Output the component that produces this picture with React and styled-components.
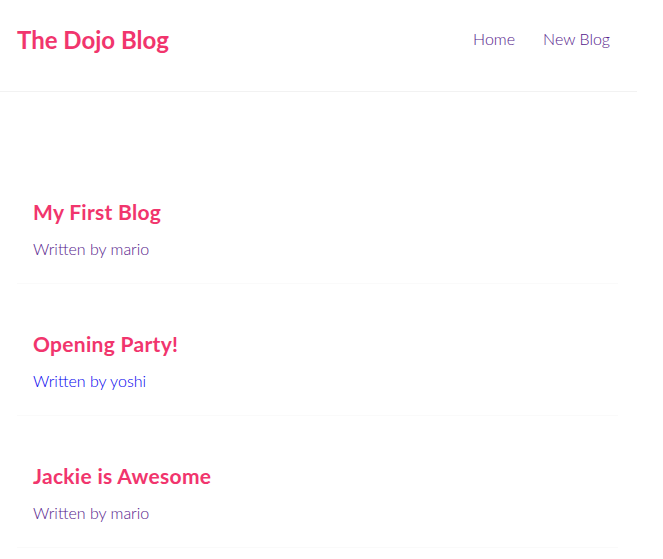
import React from 'react';
import styled, { createGlobalStyle } from 'styled-components';

const GlobalStyle = createGlobalStyle`
    body {
        margin: 0;
        background: #ffffff;
        font-family: Lato, "Noto Sans", sans-serif;
    }
    * {
        box-sizing: border-box;
    }
`;

const Navbar = styled.nav`
    display: flex;
    align-items: center;
    width: 637px;
    height: 92px;
    padding: 20px 21px 31px 17px;
    border-bottom: 1px solid #f2f2f2;
`;

const Title = styled.h1`
    margin: 0;
    font-size: 24px;
    line-height: 40px;
    font-weight: 700;
    color: #f1356d;
`;

const Links = styled.div`
    margin-left: auto;
    padding-bottom: 4px;
    display: flex;
`;

const NavLink = styled.a`
    margin-left: 16px;
    padding: 6px;
    font-size: 16px;
    font-weight: 300;
    color: #551a8b;
    text-decoration: none;
`;

const Content = styled.div`
    width: 601px;
    margin: 40px 0 0 17px;
    padding: 20px 0;
`;

const Preview = styled.div`
    margin-top: 38px;
    padding: 10px 16px 24px;
    border-bottom: 1px solid #fafafa;
`;

const PreviewTitle = styled.h2`
    margin: 0;
    font-size: 21px;
    line-height: 24px;
    font-weight: 700;
    letter-spacing: 0.3px;
    color: #f1356d;
`;

const Author = styled.p`
    margin: 15px 0 0;
    font-size: 16px;
    line-height: 20px;
    font-weight: 300;
    color: ${props => (props.$visited ? '#551a8b' : '#0000ee')};
`;

const blogs = [
    { id: 1, title: 'My First Blog', author: 'mario', visited: true },
    { id: 2, title: 'Opening Party!', author: 'yoshi', visited: false },
    { id: 3, title: 'Jackie is Awesome', author: 'mario', visited: true },
];

const App = () => {
    return (
        <>
            <GlobalStyle />
            <Navbar>
                <Title>The Dojo Blog</Title>
                <Links>
                    <NavLink href="#">Home</NavLink>
                    <NavLink href="#">New Blog</NavLink>
                </Links>
            </Navbar>
            <Content>
                {blogs.map(blog => (
                    <Preview key={blog.id}>
                        <PreviewTitle>{blog.title}</PreviewTitle>
                        <Author $visited={blog.visited}>Written by {blog.author}</Author>
                    </Preview>
                ))}
            </Content>
        </>
    );
};

export default App;
